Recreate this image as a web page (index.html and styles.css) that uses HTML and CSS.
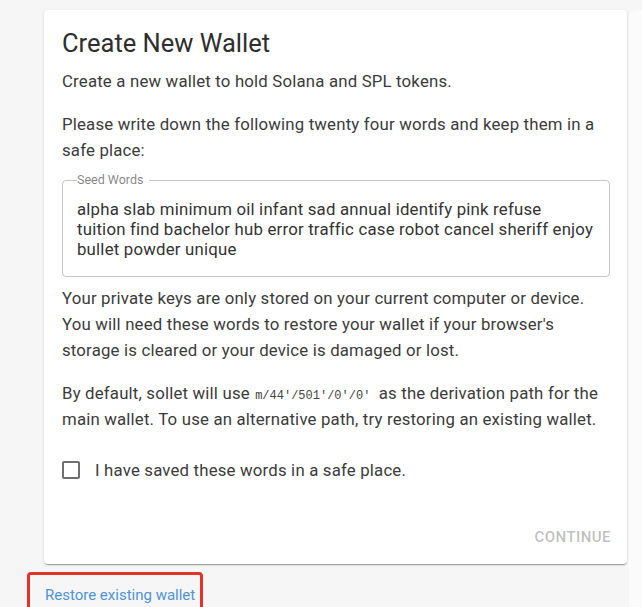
FILE: index.html
```html
<!DOCTYPE html>
<html lang="en">
<head>
<meta charset="utf-8">
<title>Create New Wallet</title>
<link rel="stylesheet" href="styles.css">
</head>
<body>
<div class="page">
  <div class="row">
    <div class="column">
      <div class="card">
        <div class="card-content">
          <h2 class="title">Create New Wallet</h2>
          <p class="para">Create a new wallet to hold Solana and SPL tokens.</p>
          <p class="para">Please write down the following twenty four words and keep them in a safe place:</p>
          <fieldset class="field">
            <legend class="field-label">Seed Words</legend>
            <div class="field-text">alpha slab minimum oil infant sad annual identify pink refuse<br>tuition find bachelor hub error traffic case robot cancel sheriff enjoy<br>bullet powder unique</div>
          </fieldset>
          <p class="para">Your private keys are only stored on your current computer or device. You will need these words to restore your wallet if your browser's storage is cleared or your device is damaged or lost.</p>
          <p class="para">By default, sollet will use <code class="code">m/44'/501'/0'/0'</code> as the derivation path for the main wallet. To use an alternative path, try restoring an existing wallet.</p>
          <label class="check-row">
            <span class="check-box"></span>
            <span class="check-label">I have saved these words in a safe place.</span>
          </label>
        </div>
        <div class="card-actions">
          <span class="btn">CONTINUE</span>
        </div>
      </div>
      <div class="highlight">
        <a class="link" href="#">Restore existing wallet</a>
      </div>
    </div>
    <div class="side-strip"></div>
  </div>
</div>
</body>
</html>
```
FILE: styles.css
```css
* { box-sizing: border-box; }
html, body {
  margin: 0;
  padding: 0;
  background: #f6f6f6;
  font-family: Roboto, "Liberation Sans", Arial, sans-serif;
  overflow: hidden;
}
.page {
  padding: 10px 0 0 27px;
}
.row {
  display: flex;
  gap: 2px;
}
.column {
  display: flex;
  flex-direction: column;
  width: 600px;
}
.card {
  margin-left: 17px;
  width: 583px;
  background: #fff;
  border-radius: 4px;
  box-shadow: 0 2px 1px -1px rgba(0,0,0,0.2), 0 1px 1px 0 rgba(0,0,0,0.14), 0 1px 3px 0 rgba(0,0,0,0.12);
}
.card-content {
  padding: 15px 17px 26px 18px;
}
.title {
  margin: 0 0 7px;
  font-size: 25.5px;
  font-weight: 400;
  line-height: 36px;
  color: #2e2e2e;
}
.para {
  margin: 0 0 17px;
  font-size: 16.8px;
  line-height: 26px;
  letter-spacing: 0.18px;
  color: #3b3b3b;
}
.code {
  font-family: "Liberation Mono", "DejaVu Sans Mono", monospace;
  font-size: 12px;
  line-height: 1;
  letter-spacing: 0;
  color: #444;
  margin: 0 4px 0 1px;
}
.field {
  margin: -7px 0 8px;
  padding: 12px 10px 17px 14px;
  border: 1px solid rgba(0,0,0,0.23);
  border-radius: 4px;
  min-width: 0;
}
.field-label {
  margin-left: 0;
  padding: 0 6px 0 0;
  font-size: 12.5px;
  line-height: 14px;
  color: rgba(0,0,0,0.5);
}
.field-text {
  font-size: 16.8px;
  line-height: 20px;
  letter-spacing: 0.2px;
  white-space: nowrap;
  color: #333;
}
.check-row {
  display: flex;
  align-items: center;
  gap: 15px;
  height: 42px;
}
.check-box {
  width: 18px;
  height: 18px;
  border: 2px solid #6f6f6f;
  border-radius: 2px;
}
.check-label {
  font-size: 16.8px;
  letter-spacing: 0.18px;
  color: #3b3b3b;
}
.card-actions {
  display: flex;
  justify-content: flex-end;
  padding: 0 8px 8px;
}
.btn {
  display: flex;
  align-items: center;
  height: 39px;
  padding: 0 8px;
  font-size: 15px;
  font-weight: 500;
  letter-spacing: 0.45px;
  color: rgba(0,0,0,0.27);
}
.highlight {
  margin-top: 8px;
  width: 176px;
  height: 40px;
  border: 3px solid #e2332a;
  border-bottom: none;
  border-radius: 4px 4px 0 0;
  padding: 10px 0 0 15px;
}
.link {
  font-size: 15px;
  color: #4f93d6;
  text-decoration: none;
}
.side-strip {
  flex: 1;
  height: 600px;
  background: #fbfbfb;
  border-radius: 8px 0 0 0;
}
```
